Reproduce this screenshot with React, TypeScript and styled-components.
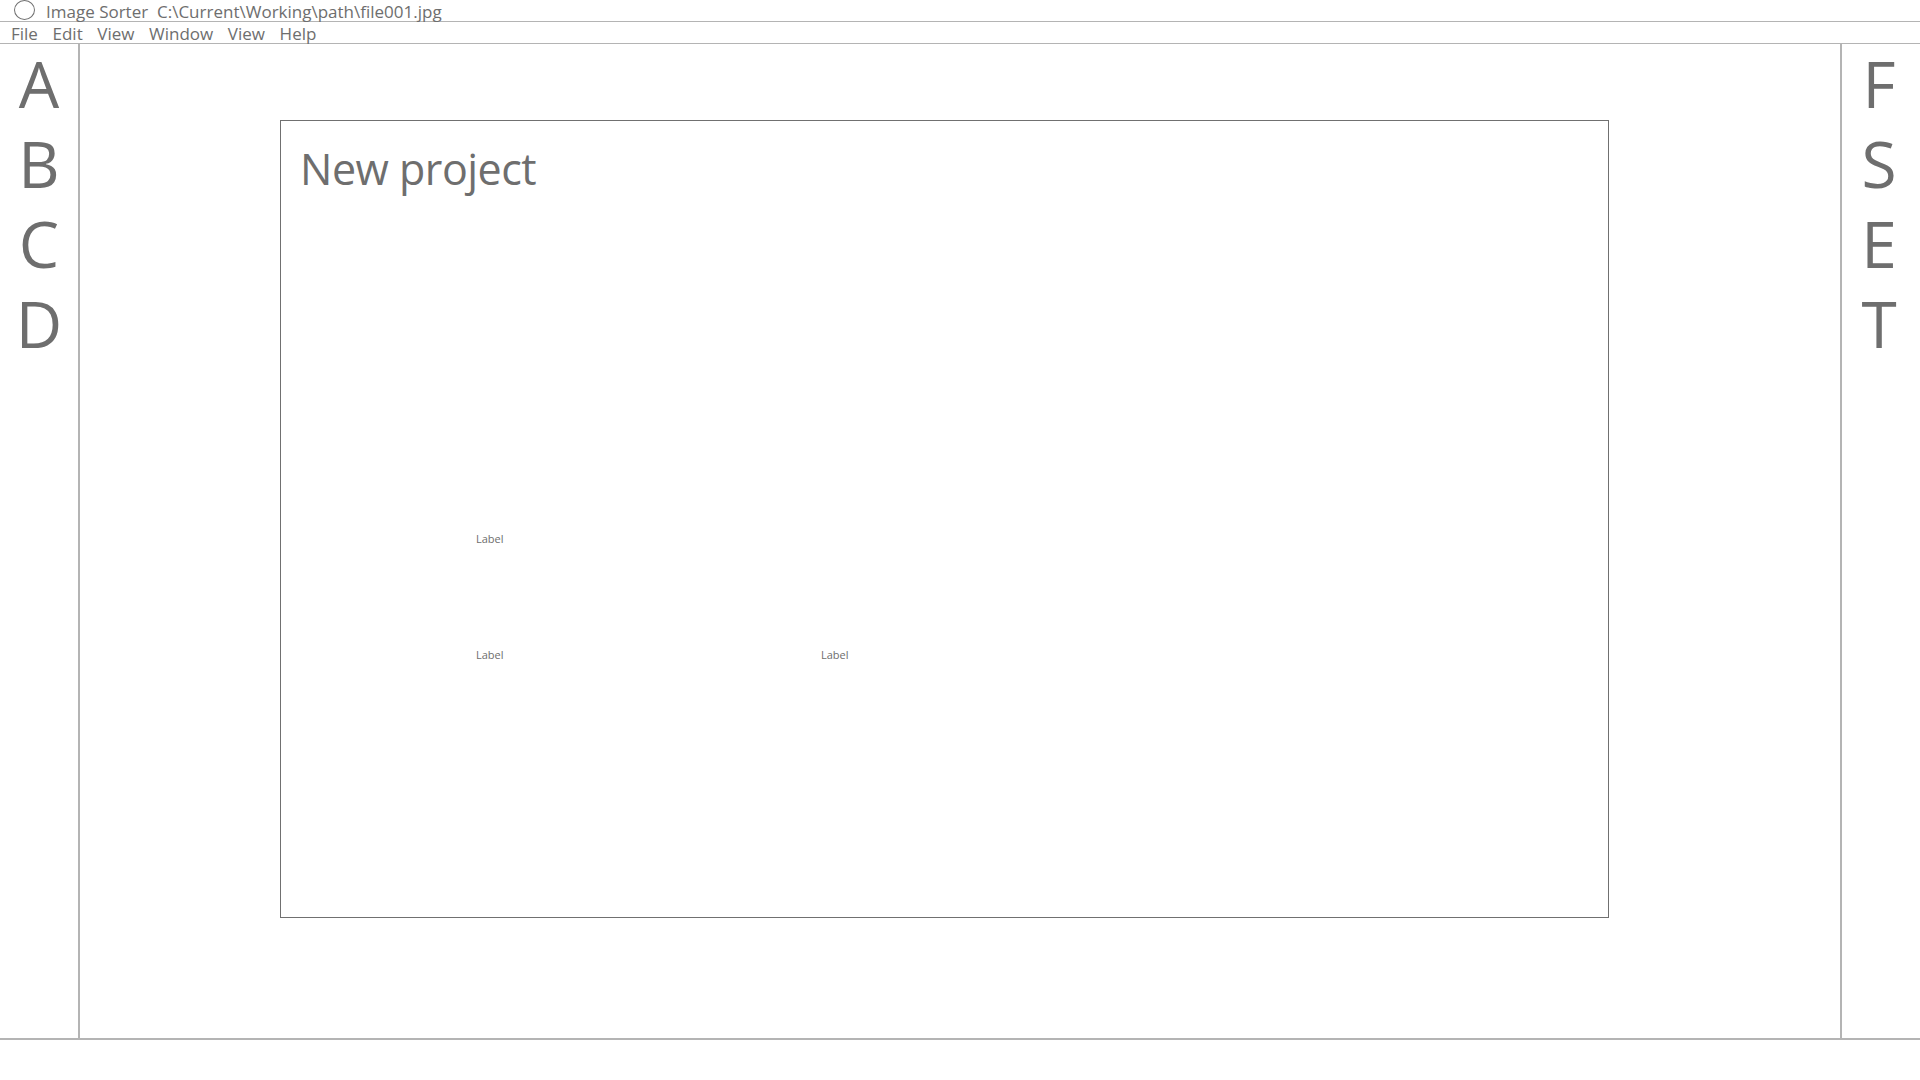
import React from "react";
import styled, { createGlobalStyle } from "styled-components";

const GlobalStyle = createGlobalStyle`
  html, body { margin: 0; padding: 0; background: #ffffff; }
  body { font-family: "Open Sans", "Noto Sans", sans-serif; color: #6e6e6e; }
  * { box-sizing: border-box; }
`;

const Window = styled.div`
  width: 1920px;
  height: 1080px;
  display: flex;
  flex-direction: column;
  background: #fff;
`;

const TitleBar = styled.div`
  height: 22px;
  border-bottom: 1px solid #b4b4b4;
  display: flex;
  align-items: center;
  gap: 11px;
  padding-left: 14px;
  padding-top: 3px;
  font-size: 17px;
  line-height: 22px;
  white-space: pre;
`;

const AppIcon = styled.span`
  width: 21px;
  height: 20px;
  border: 1.5px solid #707070;
  border-radius: 50%;
  display: inline-block;
  margin-top: -4px;
  flex: 0 0 auto;
`;

const MenuBar = styled.div`
  height: 22px;
  border-bottom: 1px solid #b4b4b4;
  display: flex;
  align-items: center;
  gap: 14.6px;
  padding-left: 11px;
  padding-top: 2px;
  font-size: 17px;
  line-height: 22px;
`;

const MenuItem = styled.span`
  display: inline-block;
`;

const Body = styled.div`
  height: 996px;
  border-bottom: 2px solid #b4b4b4;
  display: flex;
`;

const SideBar = styled.div<{ $side: "left" | "right" }>`
  width: 80px;
  flex: 0 0 80px;
  display: flex;
  flex-direction: column;
  align-items: center;
  padding-top: 0;
  ${(p) =>
    p.$side === "left"
      ? "border-right: 2px solid #b4b4b4;"
      : "border-left: 2px solid #b4b4b4; padding-right: 4px;"}
`;

const SideLetter = styled.div`
  font-size: 64px;
  line-height: 80px;
  height: 80px;
  color: #6e6e6e;
`;

const Center = styled.div`
  flex: 1;
  padding: 76px 0 0 200px;
`;

const Dialog = styled.div`
  width: 1329px;
  height: 798px;
  border: 1.5px solid #707070;
  display: flex;
  flex-direction: column;
`;

const DialogTitle = styled.div`
  font-size: 43px;
  line-height: 60px;
  padding: 18px 0 0 19px;
  color: #6e6e6e;
  letter-spacing: -0.5px;
`;

const FieldGrid = styled.div`
  display: grid;
  grid-template-columns: 345px 345px;
  grid-template-rows: 116px 20px;
  margin: 332px 0 0 195px;
`;

const FieldLabel = styled.div<{ $col: number; $row: number }>`
  grid-column: ${(p) => p.$col};
  grid-row: ${(p) => p.$row};
  font-size: 11px;
  line-height: 16px;
  color: #6e6e6e;
`;

export default function App() {
  return (
    <>
      <GlobalStyle />
      <Window>
        <TitleBar>
          <AppIcon />
          <span>Image Sorter  C:\Current\Working\path\file001.jpg</span>
        </TitleBar>
        <MenuBar>
          {["File", "Edit", "View", "Window", "View", "Help"].map((m, i) => (
            <MenuItem key={i}>{m}</MenuItem>
          ))}
        </MenuBar>
        <Body>
          <SideBar $side="left">
            {["A", "B", "C", "D"].map((l) => (
              <SideLetter key={l}>{l}</SideLetter>
            ))}
          </SideBar>
          <Center>
            <Dialog>
              <DialogTitle>New project</DialogTitle>
              <FieldGrid>
                <FieldLabel $col={1} $row={1}>Label</FieldLabel>
                <FieldLabel $col={1} $row={2}>Label</FieldLabel>
                <FieldLabel $col={2} $row={2}>Label</FieldLabel>
              </FieldGrid>
            </Dialog>
          </Center>
          <SideBar $side="right">
            {["F", "S", "E", "T"].map((l) => (
              <SideLetter key={l}>{l}</SideLetter>
            ))}
          </SideBar>
        </Body>
      </Window>
    </>
  );
}
